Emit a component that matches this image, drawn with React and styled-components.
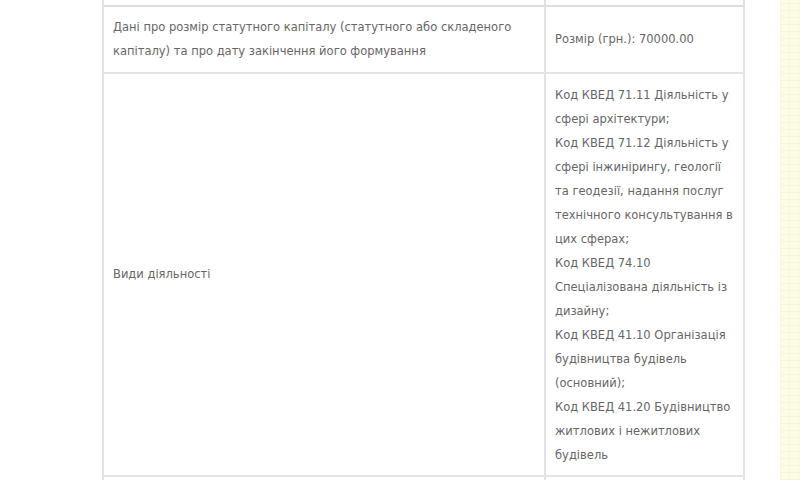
import React from "react";
import styled, {createGlobalStyle} from "styled-components";

const GlobalStyle = createGlobalStyle`
  html, body {
    margin: 0;
    padding: 0;
    background: #ffffff;
  }
  body {
    font-family: "DejaVu Sans", Verdana, sans-serif;
  }
`;

const kveds = [
  "Код КВЕД 71.11 Діяльність у сфері архітектури;",
  "Код КВЕД 71.12 Діяльність у сфері інжинірингу, геології та геодезії, надання послуг технічного консультування в цих сферах;",
  "Код КВЕД 74.10 Спеціалізована діяльність із дизайну;",
  "Код КВЕД 41.10 Організація будівництва будівель (основний);",
  "Код КВЕД 41.20 Будівництво житлових і нежитлових будівель",
];

const App = () => {
  return (
    <Page>
      <GlobalStyle />
      <Gutter />
      <TableWrap>
        <InfoTable>
          <colgroup>
            <col style={{width: 442}} />
            <col />
          </colgroup>
          <tbody>
            <EdgeRow>
              <td />
              <td />
            </EdgeRow>
            <tr>
              <Cell>
                Дані про розмір статутного капіталу (статутного або складеного
                капіталу) та про дату закінчення його формування
              </Cell>
              <Cell>Розмір (грн.): 70000.00</Cell>
            </tr>
            <tr>
              <Cell>Види діяльності</Cell>
              <Cell $tall>
                {kveds.map((k) => (
                  <Entry key={k}>{k}</Entry>
                ))}
              </Cell>
            </tr>
            <tr>
              <Cell $empty />
              <Cell $empty />
            </tr>
          </tbody>
        </InfoTable>
      </TableWrap>
      <Spacer />
      <Strip />
    </Page>
  );
};

const Page = styled.div`
  display: flex;
  width: 800px;
  height: 480px;
  overflow: hidden;
  background: #fff;
`;

const Gutter = styled.div`
  width: 102px;
  flex-shrink: 0;
`;

const TableWrap = styled.div`
  width: 643px;
  flex-shrink: 0;
`;

const InfoTable = styled.table`
  width: 100%;
  border-collapse: collapse;
  table-layout: fixed;
  border-left: 2px solid #e2e2e2;
  border-right: 2px solid #e2e2e2;
`;

const EdgeRow = styled.tr`
  td {
    height: 5px;
    padding: 0;
    border-right: 2px solid #e2e2e2;
    border-bottom: 2px solid #dedede;
  }
`;

const Cell = styled.td`
  padding: ${(p) => (p.$tall ? "9px 9px 8px" : "8px 9px 9px")};
  font-size: 11.5px;
  line-height: 24px;
  color: #666666;
  vertical-align: middle;
  border-right: 2px solid #e2e2e2;
  border-bottom: 2px solid #e4e4e4;
  height: ${(p) => (p.$empty ? "40px" : "auto")};
`;

const Entry = styled.div``;

const Spacer = styled.div`
  flex: 1;
`;

const Strip = styled.div`
  width: 20px;
  flex-shrink: 0;
  background-color: #fdfce6;
  background-image: repeating-linear-gradient(
      0deg,
      rgba(230, 226, 180, 0.25) 0 1px,
      transparent 1px 7px
    ),
    repeating-linear-gradient(
      90deg,
      rgba(230, 226, 180, 0.2) 0 1px,
      transparent 1px 9px
    );
`;

export default App;
